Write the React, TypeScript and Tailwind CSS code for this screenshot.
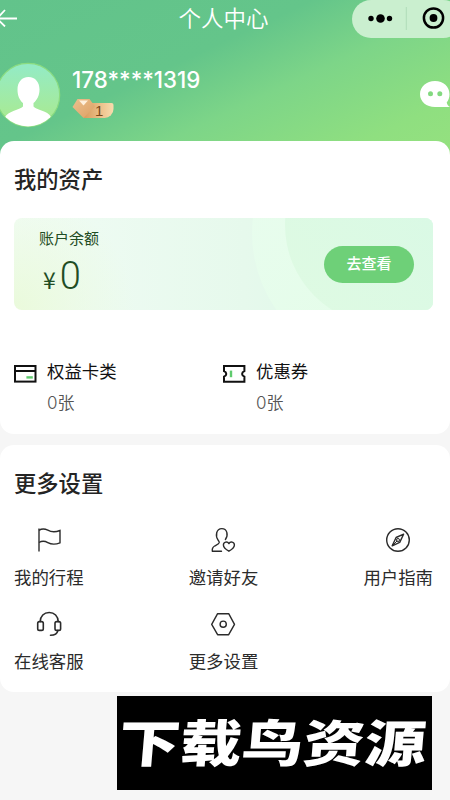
import React from "react";

type Asset = {
  name: string;
  count: number;
  icon: React.ReactNode;
};

type Setting = {
  name: string;
  icon: React.ReactNode;
};

const CardIcon = () => (
  <svg width="23" height="18" viewBox="0 0 23 18" fill="none">
    <rect x="1" y="1" width="20.500" height="15.600" stroke="#111" strokeWidth="2" />
    <path d="M1 6h20.500" stroke="#111" strokeWidth="2" />
    <path d="M12.400 12.400h6.400" stroke="#5fcb6e" strokeWidth="2.400" />
  </svg>
);

const TicketIcon = () => (
  <svg width="23" height="18" viewBox="0 0 23 18" fill="none">
    <path
      d="M1 1h20.400v5.200c-1.500.7-2.300 1.500-2.300 2.700s.8 2 2.300 2.700v5.200H1v-5.200c1.500-.7 2.300-1.500 2.300-2.700S2.500 6.900 1 6.200z"
      stroke="#111"
      strokeWidth="2"
    />
    <path d="M8 5.600v6.600" stroke="#5fcb6e" strokeWidth="2.400" />
  </svg>
);

const FlagIcon = () => (
  <svg width="26" height="26" viewBox="0 0 26 26" fill="none" stroke="#2b2b2b" strokeWidth="1.400">
    <path d="M3 1.500v23" />
    <path d="M3 3.300C5.600 1.600 8.700 1.600 11.800 3.200c3.800 2.200 7.300 2.300 12.200.3v12.300c-4.900 2-8.400 1.900-12.200-.2-3.100-1.700-6.200-1.600-8.800-.1" />
  </svg>
);

const InviteIcon = () => (
  <svg width="26" height="26" viewBox="0 0 26 26" fill="none" stroke="#2b2b2b" strokeWidth="1.400" strokeLinecap="round" strokeLinejoin="round">
    <path d="M11.500 24.300H2.400c-.5-2.500.2-4.100 2.200-5.300 2.200-1.200 4.300-2 4.600-3.300.2-1-.4-1.700-1.100-2.600C5.200 8.800 6.100 1.600 11.800 1.600c5.500 0 6.700 6.500 3.600 10.900" />
    <path d="M18.900 24.200c-3.300-1.900-5.500-3.900-5.500-6.200 0-3.200 4.100-3.900 5.500-1.400 1.400-2.500 5.500-1.800 5.500 1.400 0 2.300-2.200 4.300-5.500 6.200z" />
  </svg>
);

const CompassIcon = () => (
  <svg width="26" height="26" viewBox="0 0 26 26" fill="none" stroke="#2b2b2b" strokeWidth="1.400" strokeLinejoin="round">
    <circle cx="13" cy="13" r="11.300" />
    <path d="M18.600 7.200l-7.500 3.300-3.900 8.300 7.500-3.400z" />
    <path d="M7.200 18.800l5-5" strokeWidth="1" />
    <circle cx="13" cy="13" r="1.500" strokeWidth="1" />
  </svg>
);

const HeadsetIcon = () => (
  <svg width="26" height="26" viewBox="0 0 26 26" fill="none" stroke="#2b2b2b" strokeWidth="1.600" strokeLinecap="round">
    <path d="M4.200 10.600C4.300 5 8 1.500 13.200 1.500s8.900 3.500 9 9.100" />
    <rect x="1.700" y="10.600" width="5.600" height="8.800" rx="1.700" />
    <rect x="19" y="10.600" width="5.600" height="8.800" rx="1.700" />
    <path d="M21.800 19.600c-.5 2.900-3 4.600-7.300 4.600" />
  </svg>
);

const HexagonIcon = () => (
  <svg width="26" height="26" viewBox="0 0 26 26" fill="none" stroke="#2b2b2b" strokeWidth="1.400" strokeLinejoin="round">
    <path d="M7.600 2.700h11.100L24.500 13.300l-5.800 10.400H7.600L1.700 13.300z" />
    <circle cx="13.200" cy="13.200" r="3.100" />
  </svg>
);

const assets: Asset[] = [
  { name: "权益卡类", count: 0, icon: <CardIcon /> },
  { name: "优惠券", count: 0, icon: <TicketIcon /> },
];

const settings: Setting[] = [
  { name: "我的行程", icon: <FlagIcon /> },
  { name: "邀请好友", icon: <InviteIcon /> },
  { name: "用户指南", icon: <CompassIcon /> },
  { name: "在线客服", icon: <HeadsetIcon /> },
  { name: "更多设置", icon: <HexagonIcon /> },
];

const Avatar = () => (
  <svg width="66" height="66" viewBox="0 0 66 66">
    <defs>
      <linearGradient id="avatar" x1="0" y1="0" x2="0" y2="1">
        <stop offset="0" stopColor="#93ebc7" />
        <stop offset="1" stopColor="#acea8b" />
      </linearGradient>
      <clipPath id="avatarClip">
        <circle cx="33" cy="33" r="31.500" />
      </clipPath>
    </defs>
    <circle cx="33" cy="33" r="31.700" fill="url(#avatar)" stroke="#8bdc80" strokeWidth="1.200" />
    <g clipPath="url(#avatarClip)" fill="#fff">
      <path d="M33.500 15c7 0 11 5.500 11 12.500 0 6-2.500 10.800-6 13.500v3.500c3 3.500 14 4 17.500 10.500C51 61.500 42 65.500 33 65.500S15 61.500 10 55c3.500-6 14.500-7 18-10.500V41c-3.500-2.700-5.500-7.500-5.500-13.500 0-7 4-12.500 11-12.500z" />
    </g>
  </svg>
);

const LevelBadge = () => (
  <div className="relative mt-[5px] h-5 w-[42px]">
    <svg width="42" height="20" viewBox="0 0 42 20" className="absolute inset-0">
      <defs>
        <linearGradient id="plate" x1="0" x2="1">
          <stop offset="0" stopColor="#d99b5c" />
          <stop offset="0.600" stopColor="#eec38d" />
          <stop offset="1" stopColor="#f8dcae" />
        </linearGradient>
        <linearGradient id="gem" x1="0" y1="0" x2="1" y2="1">
          <stop offset="0" stopColor="#ecc08e" />
          <stop offset="1" stopColor="#dda063" />
        </linearGradient>
      </defs>
      <path d="M12 4h27.500a2 2 0 0 1 2 2v4a9 9 0 0 1-9 9H12z" fill="url(#plate)" />
      <path d="M5.500 0h12L23 7.500 11.500 19 .5 8z" fill="url(#gem)" />
      <path d="M7 1.500h9l-4.500 5z" fill="#fff0dc" />
    </svg>
    <span className="absolute top-[3px] left-[23px] font-['Liberation_Sans'] text-[15px] leading-[17px] text-[#7d4a1a]">
      1
    </span>
  </div>
);

const Header = () => (
  <header className="h-[155px] bg-[linear-gradient(155deg,#62c38b_0%,#64c58a_40%,#7dd588_60%,#8fdf80_85%,#95e17f_100%)]">
    <div className="grid h-[37px] grid-cols-[1fr_auto_1fr] items-center text-white">
      <svg width="20" height="18" viewBox="0 0 20 18" fill="none" stroke="#fff" strokeWidth="1.800" className="-mt-[3px]">
        <path d="M17 9.500H-1M5 1L-3 9.500 5 17.500" />
      </svg>
      <h1 className="-mt-[4px] -ml-[3px] text-[22.500px] leading-[37px] font-[350]">个人中心</h1>
      <div className="-mr-3 flex h-[38px] w-[110px] items-center justify-self-end self-end rounded-full bg-[#caefcf]">
        <svg width="110" height="38" viewBox="0 0 110 38">
          <circle cx="19" cy="18.500" r="2.700" />
          <circle cx="28.500" cy="18.500" r="4.300" />
          <circle cx="37.500" cy="18.500" r="2.700" />
          <path d="M54.300 7v23" stroke="#b0ddb8" />
          <circle cx="81.500" cy="18" r="9.600" fill="none" stroke="#000" strokeWidth="2.500" />
          <circle cx="81.500" cy="18" r="3.900" />
        </svg>
      </div>
    </div>
    <div className="mt-[24px] flex items-start">
      <div className="mt-[0.500px] -ml-[5.500px]">
        <Avatar />
      </div>
      <div className="ml-[11.500px] pt-[5px]">
        <p className="font-[Inter] text-[22.300px] leading-7 font-[450] text-white">
          178****1319
        </p>
        <LevelBadge />
      </div>
      <svg width="32" height="28" viewBox="0 0 32 28" className="mt-[19px] -mr-[2px] ml-auto">
        <path d="M15 1c8.500 0 14.500 5.500 14.500 13.300 0 3.500-1 6-2.800 8.100.5 2 1.500 3.500 3.300 4.600H15C6.500 27 0 21.700 0 14.300S6.500 1 15 1z" fill="#fff" />
        <circle cx="10.500" cy="13.700" r="2.500" fill="#83d980" />
        <circle cx="19.800" cy="13.700" r="2.500" fill="#83d980" />
      </svg>
    </div>
  </header>
);

const BalanceCard = () => (
  <div className="relative mt-[24px] flex h-[92px] items-center justify-between overflow-hidden rounded-lg bg-[radial-gradient(circle_at_0%_100%,#eafadb_0%,transparent_28%),linear-gradient(90deg,#f1fcf5_0%,#e6f9ec_55%,#d8f9e6_100%)] pr-[19px] pl-[25px]">
    <svg width="419" height="92" viewBox="0 0 419 92" className="absolute inset-0">
      <defs>
        <linearGradient id="ring" x1="0" y1="0" x2="1" y2="1">
          <stop offset="0" stopColor="#e9fdef" />
          <stop offset="1" stopColor="#e2fce6" />
        </linearGradient>
        <linearGradient id="disc" x1="0" y1="1" x2="1" y2="0">
          <stop offset="0" stopColor="#dffae2" />
          <stop offset="1" stopColor="#d7f9e7" />
        </linearGradient>
      </defs>
      <circle cx="371" cy="15" r="133" fill="url(#ring)" />
      <circle cx="371" cy="7" r="100" fill="url(#disc)" />
    </svg>
    <div className="relative h-full text-[#1f4d24]">
      <p className="pt-[9px] text-[15px] leading-[22px]">账户余额</p>
      <p className="flex items-baseline pt-[2px] pl-[4px]">
        <span className="text-[23px] leading-[50px]">¥</span>
        <span className="ml-[4px] font-[Roboto] text-[38px] leading-[50px] font-light">0</span>
      </p>
    </div>
    <button className="relative h-[37px] w-[90px] rounded-full bg-[#6ed078] pb-px text-[15px] font-medium text-white">
      去查看
    </button>
  </div>
);

const App = () => {
  return (
    <main className="h-[800px] w-[450px] overflow-hidden bg-[#f6f6f6] font-['Noto_Sans_CJK_SC',sans-serif]">
      <Header />

      <section className="relative -mt-[14px] h-[293px] rounded-[14px] bg-white pr-[17px] pl-[14px]">
        <h2 className="pt-[21px] text-[22.300px] leading-8 font-medium text-[#242424]">我的资产</h2>
        <BalanceCard />
        <div className="mt-[48px] grid grid-cols-[209px_1fr]">
          {assets.map((asset) => (
            <div key={asset.name} className="flex">
              <div className="pt-[7px]">{asset.icon}</div>
              <div className="ml-[10px]">
                <p className="text-[17.400px] leading-[26px] text-[#111]">{asset.name}</p>
                <p className="mt-[5px] text-[17px] leading-[25px] font-[350] text-[#555]">
                  <span className="font-[Inter] font-light">{asset.count}</span>张
                </p>
              </div>
            </div>
          ))}
        </div>
      </section>

      <section className="mt-[11px] h-[247px] rounded-[14px] bg-white pr-[17px] pl-[14px]">
        <h2 className="pt-[21px] text-[22.300px] leading-8 font-medium text-[#242424]">更多设置</h2>
        <div className="mt-[29px] grid grid-cols-[auto_auto_auto] justify-between gap-y-[21px]">
          {settings.map((setting) => (
            <div key={setting.name} className="flex flex-col items-center">
              {setting.icon}
              <p className="mt-[11px] text-[17.400px] leading-[26px] text-[#2b2b2b]">{setting.name}</p>
            </div>
          ))}
        </div>
      </section>

      <div className="mt-[4px] ml-[117px] flex h-[94px] w-[315px] items-center justify-center bg-black pr-1 pb-[5px]">
        <p className="-skew-x-[4deg] scale-y-[0.820] text-[61.500px] leading-none font-black whitespace-nowrap text-white">
          下载鸟资源
        </p>
      </div>
    </main>
  );
};

export default App;
